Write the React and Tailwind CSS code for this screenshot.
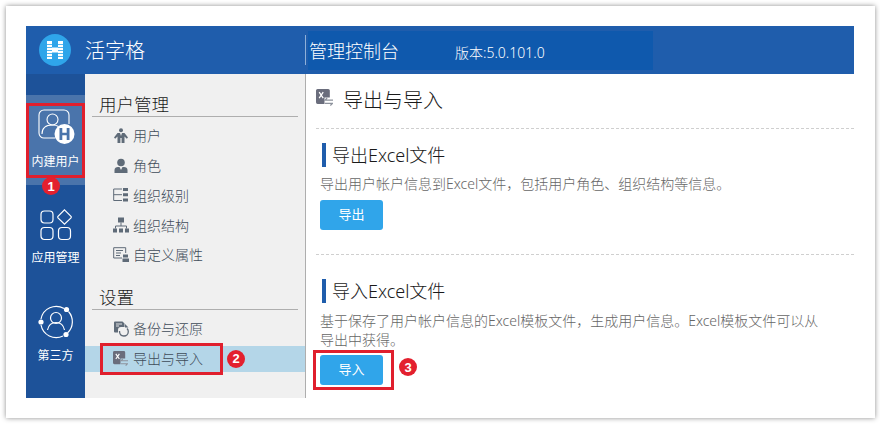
const fontClass = "font-['Noto_Sans','Noto_Sans_CJK_SC',sans-serif]";

function Badge({ n, className }) {
    return (
        <span className={`absolute z-10 flex h-[18px] w-[18px] items-center justify-center rounded-full bg-[#e3202e] font-['Liberation_Sans',sans-serif] text-[13px] font-bold leading-none text-white ${className}`}>
            {n}
        </span>
    );
}

function LogoIcon() {
    return (
        <svg width="32" height="32" viewBox="0 0 32 32">
            <circle cx="16" cy="16" r="16" fill="#2fa5ea" />
            <path d="M8 7h5v18H8zM19 7h5v18h-5zM13 13.5h6v5h-6z" fill="#fff" />
            <path d="M8 10.5h5M8 13.5h5M8 16.5h5M8 19.5h5M8 22.5h5M19 10.5h5M19 13.5h5M19 16.5h5M19 19.5h5M19 22.5h5" stroke="#2fa5ea" strokeWidth="0.8" />
        </svg>
    );
}

function BuiltinIcon() {
    return (
        <svg width="38" height="38" viewBox="0 0 38 38" fill="none" stroke="#fff" strokeWidth="1.1">
            <path d="M18 30H7a5 5 0 0 1-5-5V7a5 5 0 0 1 5-5h20a5 5 0 0 1 5 5v9" />
            <circle cx="15.5" cy="11.5" r="5.5" />
            <path d="M5 26c0-6 4-9 10.5-9 2.5 0 4.5.5 6 1.500" />
            <circle cx="27.500" cy="26" r="10" fill="#fff" stroke="none" />
            <path d="M22.500 20h2.800v12h-2.800zM29.700 20h2.800v12h-2.800zM25.300 24.700h4.400v2.600h-4.400z" fill="#4a74ab" stroke="none" />
        </svg>
    );
}

function AppsIcon() {
    return (
        <svg width="32" height="32" viewBox="0 0 32 32" fill="none" stroke="#fff" strokeWidth="1.2">
            <rect x="1" y="2" width="12" height="12" rx="3.5" />
            <rect x="1" y="18.5" width="12" height="12" rx="3.5" />
            <rect x="18.5" y="18.5" width="12" height="12" rx="3.5" />
            <path d="M24.5 .8 31 7.3a1.4 1.4 0 0 1 0 1.6l-6.500 6.300-6.500-6.300a1.400 1.400 0 0 1 0-1.600z" />
        </svg>
    );
}

function ThirdIcon() {
    return (
        <svg width="36" height="36" viewBox="0 0 36 36" fill="none" stroke="#fff" strokeWidth="1.2">
            <path d="M3 15A15.500 15.500 0 0 1 26 4.500" />
            <path d="M30.500 7.500A15.500 15.500 0 0 1 29.500 29" />
            <path d="M25 32A15.500 15.500 0 0 1 3 21" />
            <circle cx="18" cy="14" r="5.500" />
            <path d="M9.500 26c1-5 4-7.500 8.500-7.500s7.500 2.500 8.500 7.500" />
            <circle cx="28.500" cy="5.500" r="2.600" fill="#fff" stroke="none" />
            <circle cx="3" cy="18" r="2.600" fill="#fff" stroke="none" />
            <circle cx="28" cy="30.500" r="2.600" fill="#fff" stroke="none" />
        </svg>
    );
}

function UserIcon() {
    return (
        <svg width="16" height="16" viewBox="0 0 16 16" fill="#5f6b78">
            <circle cx="8" cy="2.200" r="2" />
            <path d="M4.500 5h2.500L8 8l1-3h2.500l3.500 4.500-1.200 1.200-2.300-2.200V15H8.600v-5H7.400v5H4.500V8.500L2.200 10.700 1 9.500z" />
        </svg>
    );
}

function RoleIcon() {
    return (
        <svg width="16" height="16" viewBox="0 0 16 16" fill="#5f6b78">
            <circle cx="8" cy="4.500" r="3.800" />
            <path d="M1.500 15v-3c0-2 1.500-3 3.500-3h1.500L8 12l1.500-3H11c2 0 3.500 1 3.500 3v3z" />
        </svg>
    );
}

function LevelIcon() {
    return (
        <svg width="15" height="14" viewBox="0 0 15 14">
            <path d="M9 1H.7v11.500H9M.7 6.700H9" fill="none" stroke="#5f6b78" />
            <path d="M10 0h5v3h-5zM10 5.200h5v3h-5zM10 10.500h5v3h-5z" fill="#5f6b78" />
        </svg>
    );
}

function OrgIcon() {
    return (
        <svg width="16" height="16" viewBox="0 0 16 16">
            <path d="M5 .5h6v5H5z" fill="#5f6b78" />
            <path d="M8 5.500V9M2.500 11.500V9h11v2.500" fill="none" stroke="#5f6b78" />
            <path d="M0 11.500h4v4H0zM6 11.500h4v4H6zM12 11.500h4v4h-4z" fill="#5f6b78" />
        </svg>
    );
}

function AttrIcon() {
    return (
        <svg width="16" height="15" viewBox="0 0 16 15">
            <path d="M9 11H.7V.7h12V6" fill="none" stroke="#5f6b78" />
            <path d="M3 3.500h7M3 6h5M3 8.500h4" stroke="#5f6b78" />
            <path d="M10 7.500h5v3h-5zM9.500 11.500h6.500V15H9.500z" fill="#5f6b78" />
        </svg>
    );
}

function BackupIcon() {
    return (
        <svg width="16" height="16" viewBox="0 0 16 16">
            <path d="M2 .5h7.500l2 2V6H8C6 6 5 7.200 5 9v2.500H2a1 1 0 0 1-1-1v-9a1 1 0 0 1 1-1z" fill="#5f6b78" />
            <path d="M3 3h6M3 5h3" stroke="#f0f0f0" strokeWidth="0.9" />
            <path d="M6.500 10c0 3 1.800 5 4.300 5 2.700 0 4.500-2 4.500-4.500 0-1.200-.5-2.200-1.300-3" fill="none" stroke="#5f6b78" strokeWidth="1.300" />
            <path d="M15.500 6.500H12V3z" fill="#5f6b78" />
        </svg>
    );
}

function ExcelIcon({ size = 16 }) {
    return (
        <svg width={size} height={size} viewBox="0 0 16 16">
            <path d="M1.500 0h10a1.500 1.500 0 0 1 1.500 1.500V8H8v6H1.500A1.500 1.500 0 0 1 0 12.500v-11A1.500 1.500 0 0 1 1.500 0z" fill="#6a6d7c" />
            <path d="M3 3l3.800 5.500M6.800 3L3 8.500" stroke="#fff" strokeWidth="1.200" />
            <path d="M10.500 8.500 8.500 10.500h7.500M13.500 15.500l2-2H8.500" fill="none" stroke="#8d929c" strokeWidth="1.100" />
        </svg>
    );
}

const railItems = [
    { label: '应用管理', icon: <AppsIcon />, className: 'mt-[24px]', labelClass: 'mt-[8px]' },
    { label: '第三方', icon: <ThirdIcon />, className: 'mt-[37px]', labelClass: 'mt-[7px]' },
];

const userItems = [
    { label: '用户', icon: <UserIcon /> },
    { label: '角色', icon: <RoleIcon /> },
    { label: '组织级别', icon: <LevelIcon /> },
    { label: '组织结构', icon: <OrgIcon /> },
    { label: '自定义属性', icon: <AttrIcon /> },
];

function MenuTitle({ children, className }) {
    return (
        <div className={`mx-[7px] h-[23px] border-b border-[#aeaeae] pl-[7px] text-[17.5px] font-light leading-[20px] text-[#1a1a1a] ${className}`}>
            {children}
        </div>
    );
}

function MenuItem({ icon, label }) {
    return (
        <div className="flex h-[29.75px] items-center pl-[28px] text-[14px] font-light text-[#3f4c59]">
            <span className="flex w-[20px] justify-start">{icon}</span>
            <span>{label}</span>
        </div>
    );
}

function SectionTitle({ children }) {
    return (
        <div className="ml-[2px] flex h-[24px] items-center gap-[6px]">
            <span className="h-[24px] w-[4px] bg-[#1f5dac]" />
            <span className="text-[18px] font-light leading-[24px] text-[#1a1a1a]">{children}</span>
        </div>
    );
}

function BlueButton({ children }) {
    return (
        <button className="flex h-[30px] w-[63px] items-center justify-center rounded-[3px] bg-[#30a5ea] text-[13px] text-white">
            {children}
        </button>
    );
}

export default function App() {
    return (
        <div className={`${fontClass} h-[424px] w-[880px] overflow-hidden bg-white pl-[6px] pt-[6px]`}>
            <div className="h-[412px] w-[869px] bg-white pl-[20px] pt-[20px] shadow-[0_0_5px_rgba(0,0,0,0.45)]">
                <div className="flex h-[372px] w-[828px] flex-col">
                    <header className="flex h-[48px] shrink-0 bg-[#1f5dac] text-white">
                        <div className="flex w-[279px] items-center pl-[13px]">
                            <LogoIcon />
                            <span className="ml-[14px] pt-px text-[20px] font-light">活字格</span>
                        </div>
                        <div className="my-[9px] w-px bg-[#8fb0d8]" />
                        <div className="ml-[2px] mt-[5px] flex h-[39px] w-[345px] items-center bg-[#0f59ad] pl-px">
                            <span className="pt-[2px] text-[18px] font-light">管理控制台</span>
                            <span className="ml-[56px] pt-[4px] text-[14px] font-light">版本:5.0.101.0</span>
                        </div>
                    </header>

                    <div className="flex min-h-0 flex-1">
                        <nav className="w-[59px] shrink-0 bg-[#1d5299] pt-[21px] text-[12px] text-white">
                            <div className="relative flex h-[90px] flex-col items-center bg-[#4a74ab] pt-[13px]">
                                <div className="absolute inset-x-0 top-[8px] h-[75px] border-[3px] border-[#e01f2d]" />
                                <BuiltinIcon />
                                <span className="mt-[7px] leading-[18px]">内建用户</span>
                                <Badge n="1" className="left-[16px] top-[82px]" />
                            </div>
                            {railItems.map((item) => (
                                <div key={item.label} className={`flex flex-col items-center ${item.className}`}>
                                    {item.icon}
                                    <span className={`leading-[18px] ${item.labelClass}`}>{item.label}</span>
                                </div>
                            ))}
                        </nav>

                        <aside className="w-[220px] shrink-0 bg-[#f0f0f0] pt-[20px]">
                            <MenuTitle>用户管理</MenuTitle>
                            <div className="pt-[4px]">
                                {userItems.map((item) => (
                                    <MenuItem key={item.label} icon={item.icon} label={item.label} />
                                ))}
                            </div>
                            <MenuTitle className="mt-[17px]">设置</MenuTitle>
                            <div className="pt-[4px]">
                                <MenuItem icon={<BackupIcon />} label="备份与还原" />
                                <div className="relative mt-[2px] flex h-[26px] items-center bg-[#b4d6e8] pl-[28px] text-[14px] font-light text-[#3f4c59]">
                                    <span className="flex w-[20px] justify-start"><ExcelIcon size={15} /></span>
                                    <span>导出与导入</span>
                                    <div className="absolute left-[15px] top-[-3px] h-[32px] w-[123px] border-[3px] border-[#e01f2d]" />
                                    <Badge n="2" className="left-[142px] top-[4px]" />
                                </div>
                            </div>
                        </aside>

                        <main className="min-w-0 flex-1 border-l border-[#aeaeae] bg-white">
                            <div className="ml-[10px] flex h-[55px] items-center border-b border-dashed border-[#cfcfcf]">
                                <span className="mb-[7px]"><ExcelIcon size={17} /></span>
                                <span className="ml-[10px] text-[20px] font-light text-[#1a1a1a]">导出与导入</span>
                            </div>
                            <section className="ml-[10px] pl-[4px] pt-[14px]">
                                <SectionTitle>导出Excel文件</SectionTitle>
                                <p className="mt-[7px] text-[14px] font-light leading-[20px] text-[#666666]">
                                    导出用户帐户信息到Excel文件，包括用户角色、组织结构等信息。
                                </p>
                                <div className="mt-[6px]"><BlueButton>导出</BlueButton></div>
                            </section>
                            <div className="ml-[10px] mt-[24px] border-b border-dashed border-[#cfcfcf]" />
                            <section className="ml-[10px] pl-[4px] pr-[24px] pt-[24px]">
                                <SectionTitle>导入Excel文件</SectionTitle>
                                <p className="mt-[8px] text-[14px] font-light leading-[19px] text-[#666666]">
                                    基于保存了用户帐户信息的Excel模板文件，生成用户信息。Excel模板文件可以从导出中获得。
                                </p>
                                <div className="relative mt-[6px]">
                                    <BlueButton>导入</BlueButton>
                                    <div className="absolute left-[-7px] top-[-5px] h-[40px] w-[81px] border-[3px] border-[#e01f2d]" />
                                    <Badge n="3" className="left-[79px] top-[3px]" />
                                </div>
                            </section>
                        </main>
                    </div>
                </div>
            </div>
        </div>
    );
}
